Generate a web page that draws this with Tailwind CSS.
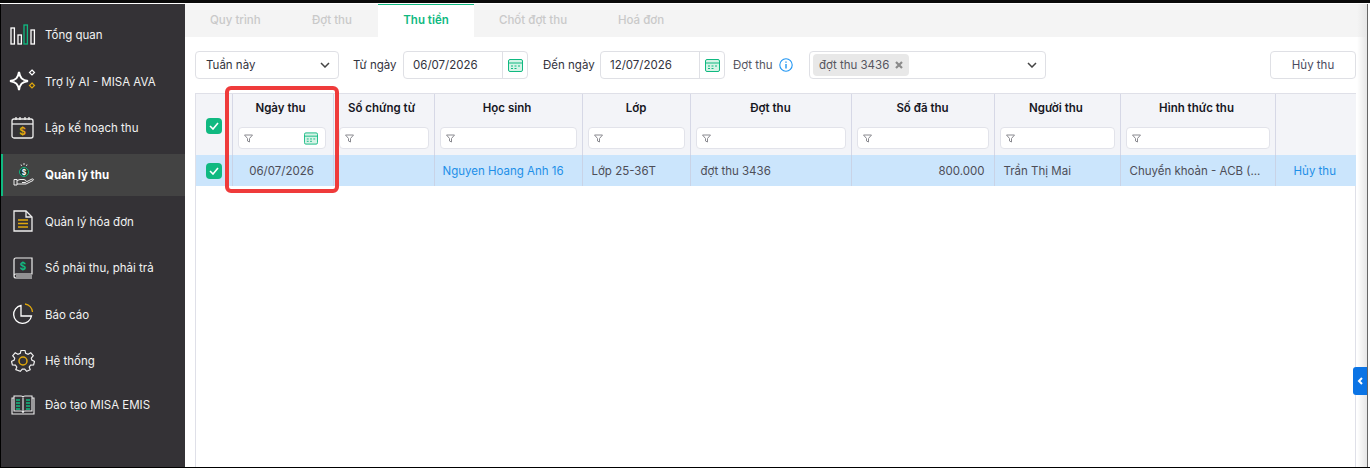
<!DOCTYPE html>
<html lang="en">

<head>
  <meta charset="UTF-8">
  <meta name="viewport" content="width=device-width, initial-scale=1.0">
  <title>Thu tiền</title>
  <script src="https://cdn.jsdelivr.net/npm/@tailwindcss/browser@4"></script>
</head>

<body class="bg-white">
  <div class="relative w-[1370px] h-[468px] overflow-hidden bg-black font-['Inter','Liberation_Sans',sans-serif] text-[11.5px] text-[#4a4a55] border-t-[3px] border-[#0a0a0a]">
    <div class="flex h-[464px] pl-px bg-black border-t border-white">

      <!-- Sidebar -->
      <aside class="w-[184px] shrink-0 bg-[#343236] text-[#f2f2f2] flex flex-col gap-[4.6px] pt-[9.8px]">
        <div class="h-[42px] flex items-center">
          <div class="w-[44px] flex justify-center">
            <svg width="26" height="22" viewBox="0 0 26 22" fill="none" stroke="#fff" stroke-width="1.3"><rect x="1" y="4" width="3.4" height="16"/><rect x="8" y="11" width="3.4" height="9"/><rect x="14" y="1" width="3.4" height="19" stroke="#10b981"/><rect x="21" y="6" width="3.4" height="14"/></svg>
          </div>
          <span class="pt-[2px]">Tổng quan</span>
        </div>
        <div class="h-[42px] flex items-center">
          <div class="w-[44px] flex justify-center">
            <svg width="28" height="24" viewBox="0 0 28 24" fill="none"><path d="M10 3 C11 9 13 11 19 12 C13 13 11 15 10 21 C9 15 7 13 1 12 C7 11 9 9 10 3Z" stroke="#fff" stroke-width="2"/><path d="M23 1l2.5 2.5L23 6l-2.5-2.5Z" stroke="#fff" stroke-width="1.2"/><path d="M23 14l2.5 2.5L23 19l-2.5-2.5Z" stroke="#e0a80d" stroke-width="1.2"/></svg>
          </div>
          <span class="pt-[2px]">Trợ lý AI - MISA AVA</span>
        </div>
        <div class="h-[42px] flex items-center">
          <div class="w-[44px] flex justify-center">
            <svg width="24" height="24" viewBox="0 0 24 24" fill="none" stroke="#eee" stroke-width="1.3"><rect x="1" y="3" width="21" height="19" rx="2"/><path d="M1 8h21"/><path d="M5 1v3M9 1v3M14 1v3M18 1v3"/><text x="11.5" y="19" text-anchor="middle" font-size="10" font-weight="700" fill="#e0a80d" stroke="none">$</text></svg>
          </div>
          <span class="pt-[2px]">Lập kế hoạch thu</span>
        </div>
        <div class="h-[42px] flex items-center bg-[#434343] border-l-[2px] border-[#10b981]">
          <div class="w-[42px] flex justify-center">
            <svg width="22" height="25" viewBox="0 0 22 25" fill="none" stroke="#eee" stroke-width="1"><circle cx="11" cy="10" r="4.5" stroke="#10b981" fill="#1e3a30"/><path d="M11 1v2M8 2.500l.6 1.500M14 2.500l-.6 1.500" stroke="#ddd"/><path d="M1 17.500h3v5.500H1ZM4 18.500l3-1h4l2 1c1 .8.5 2-1 2H9M4 22h9l7-3.500c1-.8.3-2-1-1.500l-5 2.500"/><text x="11" y="12.500" text-anchor="middle" font-size="7" font-weight="700" fill="#fff" stroke="none">$</text></svg>
          </div>
          <span class="pt-[2px] font-bold text-white">Quản lý thu</span>
        </div>
        <div class="h-[42px] flex items-center">
          <div class="w-[44px] flex justify-center">
            <svg width="20" height="22" viewBox="0 0 20 22" fill="none" stroke="#eee" stroke-width="1.3"><path d="M1 1h12l6 6v14H1Z"/><path d="M13 1v6h6"/><path d="M5 10h10M5 13.500h10M5 17h10" stroke="#e0a80d" stroke-width="1.500"/></svg>
          </div>
          <span class="pt-[2px]">Quản lý hóa đơn</span>
        </div>
        <div class="h-[42px] flex items-center">
          <div class="w-[44px] flex justify-center">
            <svg width="20" height="22" viewBox="0 0 20 22" fill="none" stroke="#eee" stroke-width="1.2"><path d="M3 1h16v16H3C1.500 17 1 18 1 19V3C1 2 1.500 1 3 1Z"/><path d="M1 19c0 1 .5 2 2 2h16M3 19h16"/><text x="10" y="12.500" text-anchor="middle" font-size="10" font-weight="700" fill="#10b981" stroke="none">$</text></svg>
          </div>
          <span class="pt-[2px]">Sổ phải thu, phải trả</span>
        </div>
        <div class="h-[42px] flex items-center">
          <div class="w-[44px] flex justify-center">
            <svg width="22" height="22" viewBox="0 0 22 22" fill="none" stroke="#fff" stroke-width="1.3"><path d="M9 2.500a9 9 0 1 0 10.500 10.500H9Z"/><path d="M13 1a8.500 8.500 0 0 1 7.500 8" stroke="#e0a80d"/></svg>
          </div>
          <span class="pt-[2px]">Báo cáo</span>
        </div>
        <div class="h-[42px] flex items-center">
          <div class="w-[44px] flex justify-center">
            <svg width="24" height="24" viewBox="0 0 24 24" fill="none" stroke="#eee" stroke-width="1.200"><path d="M10 1h4l.7 3 2.400 1 2.700-1.500 2.500 3-2 2.400.5 2.100 2.700 1.500-.9 3.500-3 .2-1.400 2 1 2.800-3.500 1.700-2-2.200h-2.400l-2 2.200L4.800 21l1-2.800-1.400-2-3-.2L.5 12.500 3.200 11l.5-2.100-2-2.400 2.500-3L6.900 5l2.400-1Z" transform="translate(0 .5) scale(1 .96)"/><circle cx="12" cy="12" r="4" stroke="#e0a80d" stroke-width="1.500"/></svg>
          </div>
          <span class="pt-[2px]">Hệ thống</span>
        </div>
        <div class="h-[42px] flex items-center -mt-[3px]">
          <div class="w-[44px] flex justify-center">
            <svg width="24" height="20" viewBox="0 0 24 20" fill="none" stroke="#eee" stroke-width="1.100"><path d="M3 1h7c1 0 2 .5 2 1.500C12 1.500 13 1 14 1h7v15h-7c-1 0-2 .5-2 1.500 0-1-1-1.500-2-1.500H3Z"/><path d="M3 3H1v16h22V3h-2M12 3v15"/><path d="M5 5h4M5 8h4M5 11h4M5 14h4M15 5h4M15 8h4M15 11h4M15 14h4" stroke="#10b981" stroke-width="1.500"/></svg>
          </div>
          <span class="pt-[2px]">Đào tạo MISA EMIS</span>
        </div>
      </aside>

      <!-- Main -->
      <main class="w-[1182px] shrink-0 bg-white flex flex-col">
        <nav class="h-[33px] bg-[#f4f4f4] flex text-[#c9c9c9] font-medium">
          <div class="w-[97px] pl-[25px] flex items-center">Quy trình</div>
          <div class="w-[96px] pl-[30px] flex items-center">Đợt thu</div>
          <div class="w-[96px] border-t border-[#10b981] bg-white text-[#10b981] font-semibold flex items-center justify-center">Thu tiền</div>
          <div class="w-[119px] pl-[25px] flex items-center">Chốt đợt thu</div>
          <div class="pl-[25px] flex items-center">Hoá đơn</div>
        </nav>

        <div class="flex items-center h-[28px] mt-[14px] ml-[10px] text-[#33333d]">
          <div class="w-[144px] h-full border border-[#dfe0e5] rounded flex items-center justify-between pl-[10px] pr-[8px]">
            <span class="pt-[2px]">Tuần này</span>
            <svg width="10" height="6" viewBox="0 0 10 6" fill="none" stroke="#444" stroke-width="1.500"><path d="M1 1l4 4 4-4"/></svg>
          </div>
          <span class="ml-[14px] w-[50px] pt-[2px]">Từ ngày</span>
          <div class="w-[125px] h-full border border-[#dfe0e5] rounded flex items-center">
            <span class="w-[98px] pl-[9px] pt-[2px]">06/07/2026</span>
            <div class="flex-1 h-full border-l border-[#dfe0e5] flex items-center justify-center">
              <svg width="15" height="13" viewBox="0 0 15 13" fill="#d5f3e6" stroke="#10b981" stroke-width="1"><rect x=".5" y=".5" width="14" height="12" rx="1.500"/><path d="M.5 4h14" /><path d="M3 7h2M6.500 7h2M10 7h2M3 9.500h2M6.500 9.500h2" /></svg>
            </div>
          </div>
          <span class="ml-[15px] w-[57px] pt-[2px]">Đến ngày</span>
          <div class="w-[125px] h-full border border-[#dfe0e5] rounded flex items-center">
            <span class="w-[98px] pl-[9px] pt-[2px]">12/07/2026</span>
            <div class="flex-1 h-full border-l border-[#dfe0e5] flex items-center justify-center">
              <svg width="15" height="13" viewBox="0 0 15 13" fill="#d5f3e6" stroke="#10b981" stroke-width="1"><rect x=".5" y=".5" width="14" height="12" rx="1.500"/><path d="M.5 4h14" /><path d="M3 7h2M6.500 7h2M10 7h2M3 9.500h2M6.500 9.500h2" /></svg>
            </div>
          </div>
          <span class="ml-[8px] w-[40px] text-[#55555f] pt-[2px]">Đợt thu</span>
          <svg class="ml-[6px]" width="14" height="14" viewBox="0 0 14 14" fill="none" stroke="#2196f3" stroke-width="1.100"><circle cx="7" cy="7" r="6.200"/><path d="M7 6v4.500M7 3.500v1.200" stroke-width="1.400"/></svg>
          <div class="ml-[16px] w-[237px] h-full border border-[#dfe0e5] rounded flex items-center justify-between pl-[3px] pr-[8px]">
            <div class="h-[22px] w-[96px] bg-[#e8e8e8] rounded-sm flex items-center pl-[6px] gap-[6px] text-[#55555f]">
              <span class="w-[70px] shrink-0 whitespace-nowrap pt-[2px]">đợt thu 3436</span>
              <svg width="8" height="8" viewBox="0 0 8 8" fill="none" stroke="#8a8a8a" stroke-width="2.200"><path d="M1 1l6 6M7 1L1 7"/></svg>
            </div>
            <svg width="10" height="6" viewBox="0 0 10 6" fill="none" stroke="#444" stroke-width="1.500"><path d="M1 1l4 4 4-4"/></svg>
          </div>
          <button class="ml-[224px] w-[86px] h-full border border-[#dfe0e5] rounded text-[#4a4a60] pt-[2px]">Hủy thu</button>
        </div>

        <!-- Table -->
        <div class="ml-[10px] mt-[14px] w-[1161px] flex-1 border border-[#dfe0e8] border-b-0">
          <table class="table-fixed border-collapse w-[1160px]">
            <colgroup>
              <col class="w-[36px]"><col class="w-[101px]"><col class="w-[101px]"><col class="w-[148px]"><col class="w-[108px]"><col class="w-[161px]"><col class="w-[143px]"><col class="w-[126px]"><col class="w-[155px]"><col class="w-[81px]">
            </colgroup>
            <thead>
              <tr class="h-[61px] bg-[#f3f4f8] text-[#17171f] font-semibold">
                <th class="border-r border-[#d6d8e6] pt-[2px]">
                  <span class="inline-flex w-4 h-4 rounded bg-[#10b981] items-center justify-center align-middle"><svg width="10" height="8" viewBox="0 0 10 8" fill="none" stroke="#fff" stroke-width="1.600"><path d="M1 4l3 3 5-6"/></svg></span>
                </th>
                <th class="border-r border-[#d6d8e6] p-0 align-top">
                  <div class="h-[23px] flex items-end justify-center font-semibold pr-[4px]">Ngày thu</div>
                  <div class="ml-[5px] mr-[7px] mt-[10px] h-[22px] bg-white border border-[#e2e3ea] rounded flex items-center justify-between pl-[5px] pr-[7px]">
                    <svg width="9" height="9" viewBox="0 0 9 9" fill="none" stroke="#8a8a90"><path d="M.5 1h8L5.500 4.500V8L3.500 7V4.500Z"/></svg>
                    <svg width="14" height="13" viewBox="0 0 15 13" fill="#d5f3e6" stroke="#10b981" stroke-width="1"><rect x=".5" y=".5" width="14" height="12" rx="1.500"/><path d="M.5 4h14" /><path d="M3 7h2M6.500 7h2M10 7h2M3 9.500h2M6.500 9.500h2" /></svg>
                  </div>
                </th>
                <th class="border-r border-[#d6d8e6] p-0 align-top">
                  <div class="h-[23px] flex items-end justify-center font-semibold pr-[4px]">Số chứng từ</div>
                  <div class="mx-[5px] mt-[10px] h-[22px] bg-white border border-[#e2e3ea] rounded flex items-center px-[5px]"><svg width="9" height="9" viewBox="0 0 9 9" fill="none" stroke="#8a8a90"><path d="M.5 1h8L5.500 4.500V8L3.500 7V4.500Z"/></svg></div>
                </th>
                <th class="border-r border-[#d6d8e6] p-0 align-top">
                  <div class="h-[23px] flex items-end justify-center font-semibold pr-[2px]">Học sinh</div>
                  <div class="mx-[5px] mt-[10px] h-[22px] bg-white border border-[#e2e3ea] rounded flex items-center px-[5px]"><svg width="9" height="9" viewBox="0 0 9 9" fill="none" stroke="#8a8a90"><path d="M.5 1h8L5.500 4.500V8L3.500 7V4.500Z"/></svg></div>
                </th>
                <th class="border-r border-[#d6d8e6] p-0 align-top">
                  <div class="h-[23px] flex items-end justify-center font-semibold">Lớp</div>
                  <div class="mx-[5px] mt-[10px] h-[22px] bg-white border border-[#e2e3ea] rounded flex items-center px-[5px]"><svg width="9" height="9" viewBox="0 0 9 9" fill="none" stroke="#8a8a90"><path d="M.5 1h8L5.500 4.500V8L3.500 7V4.500Z"/></svg></div>
                </th>
                <th class="border-r border-[#d6d8e6] p-0 align-top">
                  <div class="h-[23px] flex items-end justify-center font-semibold">Đợt thu</div>
                  <div class="mx-[5px] mt-[10px] h-[22px] bg-white border border-[#e2e3ea] rounded flex items-center px-[5px]"><svg width="9" height="9" viewBox="0 0 9 9" fill="none" stroke="#8a8a90"><path d="M.5 1h8L5.500 4.500V8L3.500 7V4.500Z"/></svg></div>
                </th>
                <th class="border-r border-[#d6d8e6] p-0 align-top">
                  <div class="h-[23px] flex items-end justify-center font-semibold">Số đã thu</div>
                  <div class="mx-[5px] mt-[10px] h-[22px] bg-white border border-[#e2e3ea] rounded flex items-center px-[5px]"><svg width="9" height="9" viewBox="0 0 9 9" fill="none" stroke="#8a8a90"><path d="M.5 1h8L5.500 4.500V8L3.500 7V4.500Z"/></svg></div>
                </th>
                <th class="border-r border-[#d6d8e6] p-0 align-top">
                  <div class="h-[23px] flex items-end justify-center font-semibold pr-[2px]">Người thu</div>
                  <div class="mx-[5px] mt-[10px] h-[22px] bg-white border border-[#e2e3ea] rounded flex items-center px-[5px]"><svg width="9" height="9" viewBox="0 0 9 9" fill="none" stroke="#8a8a90"><path d="M.5 1h8L5.500 4.500V8L3.500 7V4.500Z"/></svg></div>
                </th>
                <th class="border-r border-[#d6d8e6] p-0 align-top">
                  <div class="h-[23px] flex items-end justify-center font-semibold pr-[2px]">Hình thức thu</div>
                  <div class="mx-[5px] mt-[10px] h-[22px] bg-white border border-[#e2e3ea] rounded flex items-center px-[5px]"><svg width="9" height="9" viewBox="0 0 9 9" fill="none" stroke="#8a8a90"><path d="M.5 1h8L5.500 4.500V8L3.500 7V4.500Z"/></svg></div>
                </th>
                <th></th>
              </tr>
            </thead>
            <tbody>
              <tr class="h-[31px] bg-[#cbe5fc] text-[#4d4d57]">
                <td class="border-r border-[#c9d3e6] text-center"><span class="inline-flex w-4 h-4 rounded bg-[#10b981] items-center justify-center align-middle"><svg width="10" height="8" viewBox="0 0 10 8" fill="none" stroke="#fff" stroke-width="1.600"><path d="M1 4l3 3 5-6"/></svg></span></td>
                <td class="border-r border-[#c9d3e6] text-center pt-[2px] pr-[2px]">06/07/2026</td>
                <td class="border-r border-[#c9d3e6]"></td>
                <td class="border-r border-[#c9d3e6] pl-[8px] pt-[2px] text-[#1e8fe8]">Nguyen Hoang Anh 16</td>
                <td class="border-r border-[#c9d3e6] pl-[9px] pt-[2px]">Lớp 25-36T</td>
                <td class="border-r border-[#c9d3e6] pl-[10px] pt-[2px]">đợt thu 3436</td>
                <td class="border-r border-[#c9d3e6] pr-[9px] pt-[2px] text-right">800.000</td>
                <td class="border-r border-[#c9d3e6] pl-[9px] pt-[2px]">Trần Thị Mai</td>
                <td class="border-r border-[#c9d3e6] pl-[9px] pt-[2px] truncate">Chuyển khoản - ACB (...</td>
                <td class="text-center text-[#1e8fe8] pt-[2px] pr-[2px]">Hủy thu</td>
              </tr>
            </tbody>
          </table>
        </div>
      </main>

      <div class="flex-1 bg-white border-l border-[#666]"></div>
    </div>

    <!-- Highlight box over the first date column -->
    <div class="absolute left-[225px] top-[83px] w-[114px] h-[107px] border-[4px] border-[#ef3b3b] rounded-[6px]"></div>
    <!-- Soft shadow on the right edge of the content -->
    <div class="absolute left-[1357px] top-[1px] w-[10px] h-[463px] bg-gradient-to-r from-transparent to-[#e6e6e6]"></div>
    <!-- Collapse tab -->
    <div class="absolute left-[1353px] top-[364px] w-[14px] h-[28px] bg-[#0b74e5] rounded-l-[3px] flex items-center justify-center">
      <svg width="6" height="8" viewBox="0 0 6 8" fill="none" stroke="#fff" stroke-width="2"><path d="M5 1L2 4l3 3"/></svg>
    </div>
  </div>
</body>

</html>
